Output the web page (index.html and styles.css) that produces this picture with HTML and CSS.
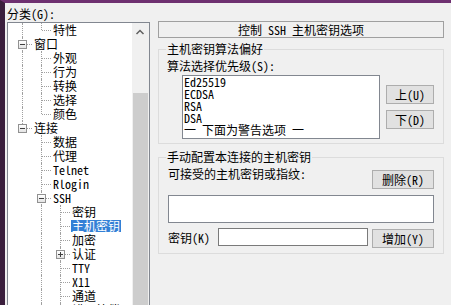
FILE: index.html
```html
<!DOCTYPE html>
<html>
<head>
  <meta http-equiv="Content-Type" content="text/html; charset=utf-8" />
  <title>PuTTY 配置</title>
<link rel="stylesheet" href="styles.css">
</head>
<body>

<div class="frame">
  <div class="cat">
    <div class="cat-label">分类(G):</div>
    <div class="tree">
      <div class="tree-list">
        <div class="row"><span class="g v"></span><span class="g l"></span><span class="txt">特性</span></div>
        <div class="row"><span class="g t"><i class="box"></i></span><span class="txt">窗口</span></div>
        <div class="row"><span class="g v"></span><span class="g t"></span><span class="txt">外观</span></div>
        <div class="row"><span class="g v"></span><span class="g t"></span><span class="txt">行为</span></div>
        <div class="row"><span class="g v"></span><span class="g t"></span><span class="txt">转换</span></div>
        <div class="row"><span class="g v"></span><span class="g t"></span><span class="txt">选择</span></div>
        <div class="row"><span class="g v"></span><span class="g l"></span><span class="txt">颜色</span></div>
        <div class="row"><span class="g l"><i class="box"></i></span><span class="txt">连接</span></div>
        <div class="row"><span class="g"></span><span class="g t"></span><span class="txt">数据</span></div>
        <div class="row"><span class="g"></span><span class="g t"></span><span class="txt">代理</span></div>
        <div class="row"><span class="g"></span><span class="g t"></span><span class="txt">Telnet</span></div>
        <div class="row"><span class="g"></span><span class="g t"></span><span class="txt">Rlogin</span></div>
        <div class="row"><span class="g"></span><span class="g t"><i class="box"></i></span><span class="txt">SSH</span></div>
        <div class="row"><span class="g"></span><span class="g v"></span><span class="g t"></span><span class="txt">密钥</span></div>
        <div class="row"><span class="g"></span><span class="g v"></span><span class="g t"></span><span class="txt sel">主机密钥</span></div>
        <div class="row"><span class="g"></span><span class="g v"></span><span class="g t"></span><span class="txt">加密</span></div>
        <div class="row"><span class="g"></span><span class="g v"></span><span class="g t"><i class="box plus"></i></span><span class="txt">认证</span></div>
        <div class="row"><span class="g"></span><span class="g v"></span><span class="g t"></span><span class="txt">TTY</span></div>
        <div class="row"><span class="g"></span><span class="g v"></span><span class="g t"></span><span class="txt">X11</span></div>
        <div class="row"><span class="g"></span><span class="g v"></span><span class="g t"></span><span class="txt">通道</span></div>
        <div class="row"><span class="g"></span><span class="g v"></span><span class="g t"></span><span class="txt">错误补偿</span></div>
      </div>
      <div class="sbar">
        <div class="sb-up">
          <svg width="17" height="17" viewBox="0 0 17 17"><polyline points="4.5,11 8,7.5 11.5,11" fill="none" stroke="#606060" stroke-width="1.5"/></svg>
        </div>
        <div class="sb-track"></div>
        <div class="sb-thumb"></div>
      </div>
    </div>
  </div>

  <div class="panel">
    <div class="title">控制 SSH 主机密钥选项</div>

    <fieldset class="group g1">
      <legend>主机密钥算法偏好</legend>
      <div class="lbl">算法选择优先级(S):</div>
      <div class="algo">
        <div class="list">
          <div>Ed25519</div>
          <div>ECDSA</div>
          <div>RSA</div>
          <div>DSA</div>
          <div>一 下面为警告选项 一</div>
        </div>
        <div class="btns">
          <button>上(U)</button>
          <button>下(D)</button>
        </div>
      </div>
    </fieldset>

    <fieldset class="group g2">
      <legend>手动配置本连接的主机密钥</legend>
      <div class="keyhead">
        <div class="lbl">可接受的主机密钥或指纹:</div>
        <button class="wide">删除(R)</button>
      </div>
      <div class="keys"></div>
      <div class="keyrow">
        <div class="lbl keylbl">密钥(K)</div>
        <div class="edit"></div>
        <button class="wide add">增加(Y)</button>
      </div>
    </fieldset>
  </div>
</div>

</body>
</html>
```

FILE: styles.css
```css
* {
  box-sizing: border-box;
}
html, body {
  margin: 0;
  padding: 0;
}
body {
  font-family: "Noto Sans Mono CJK SC", "Noto Sans CJK SC", sans-serif;
  font-size: 12px;
  color: #000;
  background: #f0f0f0;
}

.frame {
  width: 451px;
  height: 305px;
  overflow: hidden;
  display: flex;
  border-top: 3px solid #6e3070;
  border-left: 5px solid #3b1f3d;
  background: #f0f0f0;
}

/* category tree */
.cat {
  width: 143px;
  margin-left: 2px;
  flex: none;
}
.cat-label {
  height: 19px;
  padding-top: 3px;
  line-height: 15px;
}
.tree {
  display: flex;
  height: 300px;
  border: 1px solid #828790;
  background: #fff;
}
.tree-list {
  flex: 1;
  padding-left: 5px;
  overflow: hidden;
}
.row {
  display: flex;
  align-items: center;
  height: 14px;
  white-space: nowrap;
}
.g {
  position: relative;
  flex: none;
  width: 19px;
  height: 14px;
}
.g.v::before, .g.t::before, .g.l::before {
  content: "";
  position: absolute;
  left: 9px;
  top: 0;
  bottom: 0;
  border-left: 1px dotted #a0a0a0;
}
.g.l::before {
  bottom: 7px;
}
.g.t::after, .g.l::after {
  content: "";
  position: absolute;
  left: 10px;
  right: 0;
  top: 7px;
  border-top: 1px dotted #a0a0a0;
}
.box {
  position: absolute;
  z-index: 1;
  left: 5px;
  top: 3px;
  width: 9px;
  height: 9px;
  border: 1px solid #919191;
  background: linear-gradient(#ffffff, #e4e4e4);
}
.box::before {
  content: "";
  position: absolute;
  left: 1px;
  top: 3px;
  width: 5px;
  height: 1px;
  background: #404040;
}
.box.plus::after {
  content: "";
  position: absolute;
  left: 3px;
  top: 1px;
  width: 1px;
  height: 5px;
  background: #404040;
}
.txt {
  margin-left: 1px;
  padding: 0 1px;
  line-height: 12px;
  height: 12px;
}
.txt.sel {
  background: #3380d6;
  color: #fff;
}

.sbar {
  width: 17px;
  flex: none;
  display: flex;
  flex-direction: column;
  background: #f0f0f0;
}
.sb-up {
  height: 17px;
}
.sb-up svg {
  display: block;
}
.sb-track {
  height: 53px;
}
.sb-thumb {
  flex: 1;
  margin: 0 1px;
  background: #cdcdcd;
}

/* options panel */
.panel {
  width: 286px;
  margin-left: 8px;
  padding-top: 18px;
  flex: none;
}
.title {
  height: 17px;
  border: 1px solid #a0a0a0;
  line-height: 15px;
  text-align: center;
}
.group {
  margin: 0;
  min-width: 0;
  border: 1px solid #dcdcdc;
}
.group legend {
  padding: 0 1px;
  margin-left: -1px;
  line-height: 12px;
}
.g1 {
  margin-top: 5px;
  padding: 4px 9px 4px 8px;
}
.lbl {
  line-height: 14px;
}
.algo {
  display: flex;
  margin-top: 2px;
}
.list {
  width: 198px;
  height: 64px;
  margin-left: 15px;
  padding: 0 1px;
  border: 1px solid #828790;
  background: #fff;
}
.list div {
  height: 12px;
  line-height: 12px;
  white-space: nowrap;
}
.btns {
  display: flex;
  flex-direction: column;
  gap: 6px;
  width: 48px;
  margin-left: 6px;
  padding-top: 10px;
}
button {
  font: inherit;
  height: 19px;
  padding: 0;
  line-height: 17px;
  color: #000;
  background: #e1e1e1;
  border: 1px solid #adadad;
}
button.wide {
  width: 62px;
}

.g2 {
  margin-top: 7px;
  padding: 4px 9px 5px 9px;
}
.g2 legend {
  margin-left: -2px;
}
.keyhead {
  display: flex;
  justify-content: space-between;
  align-items: flex-start;
}
.keyhead button {
  margin-top: 3px;
}
.keys {
  height: 28px;
  margin-top: 6px;
  border: 1px solid #828790;
  background: #fff;
}
.keyrow {
  display: flex;
  align-items: flex-start;
  margin-top: 5px;
}
.keylbl {
  width: 50px;
  margin-top: 3px;
}
.edit {
  width: 150px;
  height: 18px;
  border: 1px solid #7a7a7a;
  background: #fff;
}
.add {
  margin-left: 4px;
  margin-top: 1px;
}
```
